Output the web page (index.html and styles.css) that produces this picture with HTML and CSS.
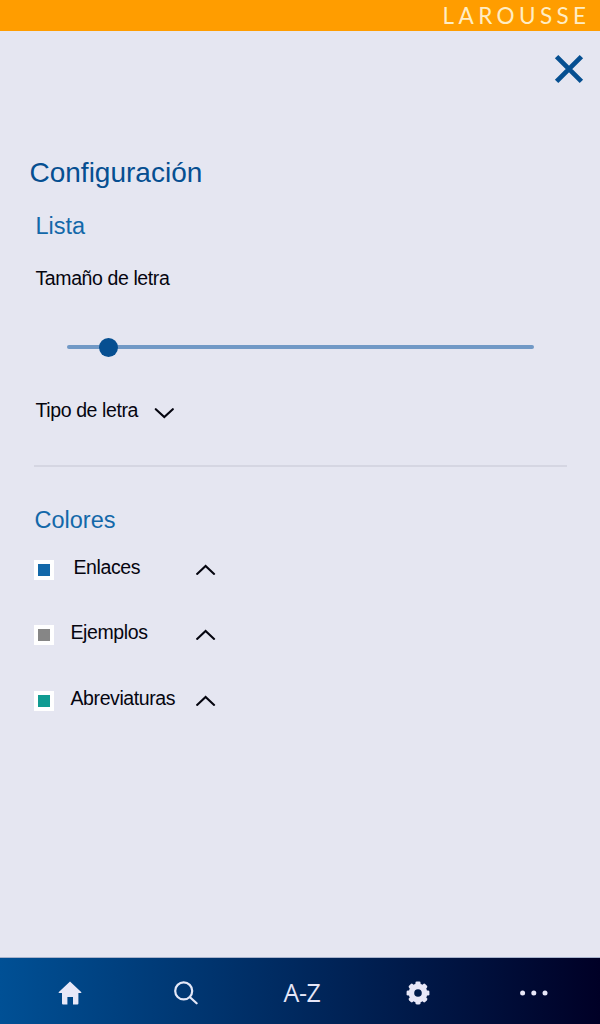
FILE: index.html
```
<!DOCTYPE html>
<html lang="es">
<head>
    <meta charset="UTF-8">
    <meta name="viewport" content="width=device-width, initial-scale=1.0">
    <title>Configuración - Larousse</title>
    <link rel="stylesheet" href="styles.css">
</head>
<body>
    <header class="brand-bar">
        <span class="brand">LAROUSSE</span>
    </header>

    <main class="settings">
        <button class="close" aria-label="Cerrar">
            <svg width="30" height="30" viewBox="0 0 30 30">
                <path d="M2.6 2.6L27.4 27.4M27.4 2.6L2.6 27.4"/>
            </svg>
        </button>

        <h1>Configuración</h1>

        <section class="list">
            <h2>Lista</h2>
            <p class="label">Tamaño de letra</p>
            <div class="slider">
                <div class="slider-thumb"></div>
            </div>
            <div class="font-type">
                <span class="label">Tipo de letra</span>
                <svg class="chevron" width="20" height="12" viewBox="0 0 20 12">
                    <path d="M1.8 2.2L10.3 10L18.8 2.2"/>
                </svg>
            </div>
        </section>

        <section class="colors">
            <h2>Colores</h2>
            <ul>
                <li>
                    <span class="swatch links"></span>
                    <span class="label label-links">Enlaces</span>
                    <svg class="chevron" width="20" height="12" viewBox="0 0 20 12">
                        <path d="M1.1 9.9L9.6 2L18.1 9.9"/>
                    </svg>
                </li>
                <li>
                    <span class="swatch examples"></span>
                    <span class="label">Ejemplos</span>
                    <svg class="chevron" width="20" height="12" viewBox="0 0 20 12">
                        <path d="M1.1 9.9L9.6 2L18.1 9.9"/>
                    </svg>
                </li>
                <li>
                    <span class="swatch abbreviations"></span>
                    <span class="label">Abreviaturas</span>
                    <svg class="chevron" width="20" height="12" viewBox="0 0 20 12">
                        <path d="M1.1 9.9L9.6 2L18.1 9.9"/>
                    </svg>
                </li>
            </ul>
        </section>
    </main>

    <nav class="tab-bar">
        <a class="tab" aria-label="Inicio">
            <svg width="24" height="24" viewBox="0 0 24 24">
                <path class="fill" d="M12 0.6L23.4 11.2Q23.6 12 22.8 12H20.4V22.4Q20.4 23.4 19.4 23.4H15V16H9.4V23.4H5Q4 23.4 4 22.4V12H1.2Q0.4 12 0.6 11.2Z"/>
            </svg>
        </a>
        <a class="tab" aria-label="Buscar">
            <svg width="24" height="24" viewBox="0 0 24 24">
                <circle class="line" cx="9.7" cy="9.9" r="8.5"/>
                <path class="line" d="M16 16.2L22.6 22.3"/>
            </svg>
        </a>
        <a class="tab tab-text">A-Z</a>
        <a class="tab" aria-label="Configuración">
            <svg width="24" height="24" viewBox="-12 -12 24 24">
                <g class="fill">
                    <rect x="-2.6" y="-11.4" width="5.2" height="22.8" rx="1.4"/>
                    <rect x="-2.6" y="-11.4" width="5.2" height="22.8" rx="1.4" transform="rotate(45)"/>
                    <rect x="-2.6" y="-11.4" width="5.2" height="22.8" rx="1.4" transform="rotate(90)"/>
                    <rect x="-2.6" y="-11.4" width="5.2" height="22.8" rx="1.4" transform="rotate(135)"/>
                    <circle r="9.4"/>
                </g>
                <circle class="gear-hole" r="3.8"/>
            </svg>
        </a>
        <a class="tab" aria-label="Más">
            <svg width="30" height="24" viewBox="0 0 30 24">
                <g class="fill">
                    <circle cx="3.6" cy="12" r="2.5"/>
                    <circle cx="14.8" cy="12" r="2.5"/>
                    <circle cx="26" cy="12" r="2.5"/>
                </g>
            </svg>
        </a>
    </nav>
</body>
</html>
```
FILE: styles.css
```
* {
    margin: 0;
    padding: 0;
    box-sizing: border-box;
}

body {
    font-family: "Liberation Sans", Arial, sans-serif;
    background: #e5e6f1;
    height: 1024px;
    display: flex;
    flex-direction: column;
    color: #05050f;
}

.brand-bar {
    height: 31px;
    background: #ff9d00;
    display: flex;
    align-items: center;
    justify-content: flex-end;
    padding-right: 9.5px;
}

.brand {
    font-family: Lato, sans-serif;
    font-weight: 400;
    font-size: 22.5px;
    line-height: 30px;
    letter-spacing: 4.4px;
    color: #ffedc4;
}

.settings {
    flex: 1;
    display: flex;
    flex-direction: column;
    padding: 23px 16px 0 29px;
}

.close {
    align-self: flex-end;
    width: 30px;
    height: 30px;
    border: none;
    background: none;
    cursor: pointer;
}

.close svg {
    display: block;
}

.close path {
    stroke: #064f91;
    stroke-width: 4.8;
}

h1 {
    margin: 73px 0 0 0.5px;
    font-size: 28px;
    font-weight: normal;
    line-height: 32px;
    color: #064f91;
}

h2 {
    font-size: 23.5px;
    font-weight: normal;
    line-height: 28px;
    color: #1368a9;
}

.label {
    font-size: 19.5px;
    line-height: 24px;
    letter-spacing: -0.4px;
}

.list {
    margin: 23px 17px 0 5px;
    height: 255px;
    border-bottom: 2px solid #d5d6e2;
}

.list h2,
.list > .label {
    margin-left: 1.5px;
}

.list > .label {
    margin-top: 26px;
}

.slider {
    display: flex;
    align-items: center;
    width: 467px;
    height: 4px;
    margin: 55px 0 0 33px;
    padding-left: 32px;
    border-radius: 2px;
    background: #7199c6;
}

.slider-thumb {
    width: 19px;
    height: 19px;
    border-radius: 50%;
    background: #064f91;
    flex-shrink: 0;
}

.font-type {
    display: flex;
    align-items: center;
    margin: 49px 0 0 1.5px;
}

.font-type .label {
    width: 118.5px;
}

.font-type .chevron {
    margin-top: 6px;
}

.chevron {
    fill: none;
    stroke: #05050f;
    stroke-width: 2.1;
    stroke-linecap: round;
}

.colors {
    margin: 39px 0 0 5px;
}

.colors h2 {
    margin-left: 0.5px;
}

.colors ul {
    list-style: none;
    margin-top: 25px;
}

.colors li {
    display: grid;
    grid-template-columns: 36px 126px 20px;
    align-items: center;
    height: 21px;
    margin-bottom: 44.7px;
}

.colors .label {
    margin-top: -6px;
    padding-left: 0.5px;
}

.colors .label-links {
    padding-left: 3.5px;
}

.swatch {
    width: 20px;
    height: 20px;
    border: 4px solid #fff;
}

.links {
    background: #1368a9;
}

.examples {
    background: #868686;
}

.abbreviations {
    background: #109b92;
}

.tab-bar {
    height: 67px;
    padding: 4px 8px 0 12px;
    border-top: 1px solid #a8b3cc;
    background: linear-gradient(90deg, #005095, #000026);
    display: grid;
    grid-template-columns: repeat(5, 1fr);
}

.tab {
    display: flex;
    align-items: center;
    justify-content: center;
}

.tab-text {
    font-family: "Open Sans", "Noto Sans", sans-serif;
    font-size: 25px;
    line-height: 34px;
    letter-spacing: -0.4px;
    padding-bottom: 3px;
    color: #e5e6f8;
}

.fill {
    fill: #e8e8f8;
}

.line {
    fill: none;
    stroke: #e3e8f8;
    stroke-width: 2.2;
    stroke-linecap: round;
}

.gear-hole {
    fill: #001c4b;
}
```
